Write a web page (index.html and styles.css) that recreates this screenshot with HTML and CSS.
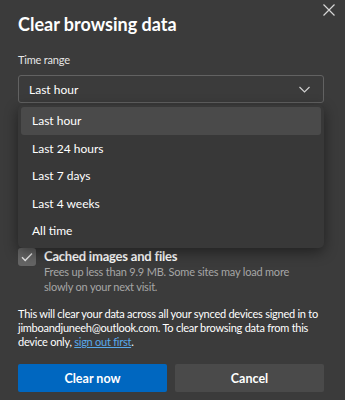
FILE: index.html
```html
<!DOCTYPE html>
<html lang="en">
    <head>
    <meta charset="utf-8">
    <title>Clear browsing data</title>
    <link rel="stylesheet" href="styles.css">
    </head>
    <body>
        <div class="dialog">
            <button type="button" class="close" aria-label="Close">
                <svg width="12" height="12" viewBox="0 0 12 12"><path d="M0.5 0.5L11.5 11.5M11.5 0.5L0.5 11.5" stroke="#d6d6d6" stroke-width="1.2" fill="none"/></svg>
            </button>
            <h1>Clear browsing data</h1>

            <label class="field-label" for="timeRange">Time range</label>
            <div class="select-wrap">
                <div class="select" id="timeRange">
                    <span>Last hour</span>
                    <svg width="11" height="7" viewBox="0 0 11 7"><path d="M0.5 1L5.5 6L10.5 1" stroke="#cfcfcf" stroke-width="1.2" fill="none"/></svg>
                </div>
                <!-- open dropdown menu, lies over the checkbox list -->
                <ul class="menu">
                    <li class="selected">Last hour</li>
                    <li>Last 24 hours</li>
                    <li>Last 7 days</li>
                    <li>Last 4 weeks</li>
                    <li>All time</li>
                </ul>
            </div>

            <div class="options">
                <div class="option">
                    <span class="checkbox">
                        <svg width="12" height="10" viewBox="0 0 12 10"><path d="M1 5.2L4.2 8.4L11 1.4" stroke="#e8e8e8" stroke-width="1.4" fill="none"/></svg>
                    </span>
                    <div class="option-text">
                        <div class="option-title">Cached images and files</div>
                        <div class="option-desc">Frees up less than 9.9 MB. Some sites may load more slowly on your next visit.</div>
                    </div>
                </div>
            </div>

            <p class="note">This will clear your data across all your synced devices signed in to jimboandjuneeh@outlook.com. To clear browsing data from this device only, <a href="#">sign out first</a>.</p>

            <div class="actions">
                <button type="button" class="primary">Clear now</button>
                <button type="button" class="secondary">Cancel</button>
            </div>
        </div>
    </body>
</html>
```

FILE: styles.css
```css
html, body {
    margin: 0;
    padding: 0;
    background: #3b3b3b;
    font-family: Lato, "Noto Sans", Arial, sans-serif;
    color: #ffffff;
}

.dialog {
    position: relative;
    width: 345px;
    height: 400px;
    box-sizing: border-box;
    padding: 11px 21px 0 18px;
}

.close {
    position: absolute;
    top: 4px;
    right: 10px;
    display: flex;
    width: 12px;
    height: 12px;
    padding: 0;
    border: none;
    background: none;
}

h1 {
    margin: 0;
    font-size: 18px;
    font-weight: 700;
    line-height: 26px;
}

.field-label {
    display: block;
    margin-top: 15px;
    font-size: 11px;
    line-height: 16px;
    letter-spacing: -0.2px;
    color: #e6e6e6;
}

.select-wrap {
    position: relative;
    margin-top: 7px;
}

.select {
    display: flex;
    align-items: center;
    justify-content: space-between;
    height: 26px;
    padding: 0 13px 0 10px;
    border: 1px solid #626262;
    border-radius: 3px;
    font-size: 12px;
}

.menu {
    position: absolute;
    top: 30px;
    left: 0;
    right: 0;
    margin: 0;
    padding: 2px 3px 3px;
    list-style: none;
    background: #383838;
    border-radius: 5px;
    box-shadow: 0 4px 14px rgba(0, 0, 0, 0.45);
    z-index: 2;
}

.menu li {
    height: 27.6px;
    line-height: 27.6px;
    padding-left: 11px;
    font-size: 12px;
    border-radius: 3px;
}

.menu li.selected {
    background: #4a4a4a;
}

.options {
    margin-top: 145px;
}

.option {
    display: flex;
    gap: 8px;
}

.checkbox {
    display: flex;
    align-items: center;
    justify-content: center;
    flex: none;
    width: 18px;
    height: 18px;
    background: #656565;
    border-radius: 3px;
}

.option-title {
    font-size: 13px;
    font-weight: 700;
    line-height: 16px;
    letter-spacing: -0.2px;
}

.option-desc {
    max-width: 250px;
    font-size: 11px;
    line-height: 15px;
    letter-spacing: -0.2px;
    color: #a6a6a6;
}

.note {
    margin: 13px 0 0;
    font-size: 11px;
    line-height: 14px;
    letter-spacing: -0.25px;
}

.note a {
    color: #59a9ec;
}

.actions {
    display: flex;
    gap: 8px;
    margin-top: 15px;
}

.actions button {
    flex: 1;
    height: 28px;
    border: none;
    border-radius: 2px;
    font-family: inherit;
    font-size: 12.5px;
    font-weight: 700;
    color: #ffffff;
}

.primary {
    background: #0067c0;
}

.secondary {
    background: #4a4a4a;
}
```
